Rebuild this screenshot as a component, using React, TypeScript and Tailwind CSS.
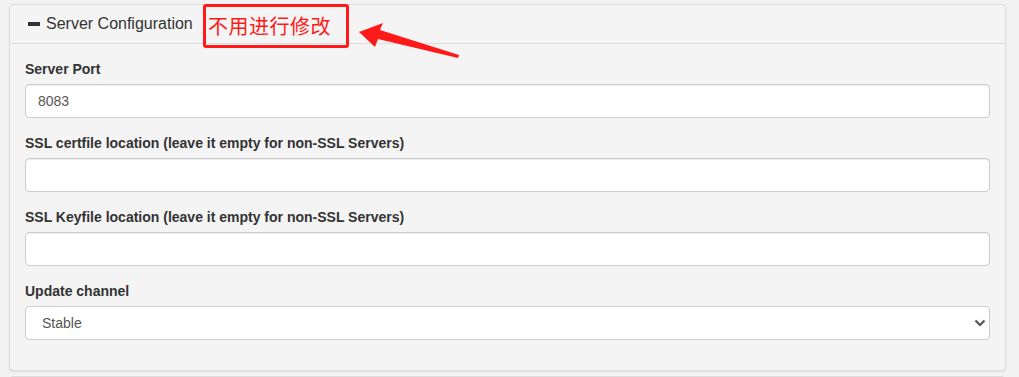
import React from 'react';

const FONT = { fontFamily: '"Liberation Sans", Arial, Helvetica, sans-serif' };

function Field({ label, value }: { label: string; value?: string }) {
  return (
    <div className="mb-[15px]">
      <label className="block mb-[5px] text-[14px] leading-[20px] font-bold text-[#333]">{label}</label>
      <input
        readOnly
        defaultValue={value}
        className="block w-full h-[34px] px-[12px] text-[14px] text-[#555] bg-white border border-[#ccc] rounded-[4px] shadow-[inset_0_1px_1px_rgba(0,0,0,0.075)] outline-none"
        style={FONT}
      />
    </div>
  );
}

export default function App() {
  return (
    <div className="w-[1019px] h-[377px] overflow-hidden bg-[#f2f2f2] pl-[9px] pr-[13px] pt-[4px]" style={FONT}>
      <div className="relative bg-[#f4f4f4] border border-[#ddd] rounded-[4px] shadow-[0_1px_2px_rgba(0,0,0,0.08)]">
        {/* Heading */}
        <div className="flex items-center h-[39px] px-[15px] border-b border-[#ddd]">
          <span className="ml-[3px] w-[12px] h-[4px] bg-[#333]" />
          <span className="ml-[6px] text-[16px] text-[#333]">Server Configuration</span>
        </div>

        {/* Annotation */}
        <div className="absolute left-[193px] top-[-1px] w-[146px] h-[44px] border-[3px] border-[#ff1a1a] rounded-[3px] flex items-center pl-[2px]">
          <span
            className="text-[20px] leading-none text-[#ff1a1a] tracking-[0.5px]"
            style={{ fontFamily: '"Noto Sans CJK SC", sans-serif' }}
          >
            不用进行修改
          </span>
        </div>
        <svg className="absolute left-[340px] top-[14px]" width="130" height="45" viewBox="0 0 130 45">
          <polygon points="9,13 33,4 30,11 109,36 108,39 28,20 25,28" fill="#ff1a1a" />
        </svg>

        {/* Body */}
        <div className="p-[15px]">
          <Field label="Server Port" value="8083" />
          <Field label="SSL certfile location (leave it empty for non-SSL Servers)" />
          <Field label="SSL Keyfile location (leave it empty for non-SSL Servers)" />
          <div className="mb-[15px]">
            <label className="block mb-[5px] text-[14px] leading-[20px] font-bold text-[#333]">Update channel</label>
            <div className="relative">
              <select
                defaultValue="stable"
                className="block w-full h-[34px] pl-[16px] pr-[30px] text-[14px] text-[#555] bg-white border border-[#ccc] rounded-[4px] appearance-none outline-none"
                style={FONT}
              >
                <option value="stable">Stable</option>
                <option value="nightly">Nightly</option>
              </select>
              <svg className="absolute right-[4px] top-[13px]" width="12" height="8" viewBox="0 0 12 8">
                <path d="M1.5 1.5 L6 6 L10.5 1.5" fill="none" stroke="#555" strokeWidth="2.2" />
              </svg>
            </div>
          </div>
        </div>
      </div>
      {/* next panel peeking */}
      <div className="mt-[5px] h-[20px] bg-[#f4f4f4] border border-[#ddd] rounded-[4px]" />
    </div>
  );
}
